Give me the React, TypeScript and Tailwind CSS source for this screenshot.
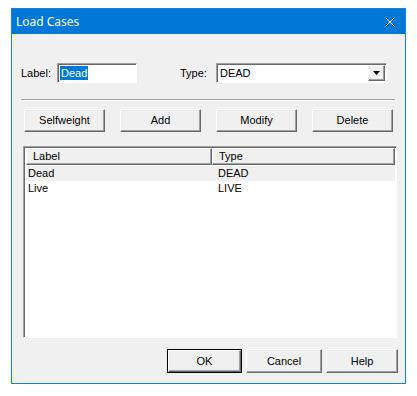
const raised =
  "border-t border-l border-t-white border-l-white border-r border-b border-r-[#696969] border-b-[#696969] shadow-[inset_-1px_-1px_0_#a0a0a0]";
const sunken =
  "border-t border-l border-t-[#a0a0a0] border-l-[#a0a0a0] border-r border-b border-r-white border-b-white shadow-[inset_1px_1px_0_#696969]";

function Button({ label, className = "" }: { label: string; className?: string }) {
  return (
    <div
      className={`h-[23px] flex items-center justify-center bg-[#f0f0f0] text-[11px] text-black ${raised} ${className}`}
    >
      {label}
    </div>
  );
}

export default function App() {
  return (
    <div className="w-[417px] h-[396px] bg-white pt-[8px] pl-[11px] font-['Liberation_Sans',Arial,sans-serif]">
      <div className="w-[395px] h-[376px] border border-[#1a80d4] flex flex-col bg-[#f0f0f0]">
        {/* title bar */}
        <div className="h-[25px] bg-[#0078d7] flex items-center justify-between pl-[4px] pr-[10px] shrink-0">
          <span className="text-white text-[12px] font-['Noto_Sans',sans-serif]">Load Cases</span>
          <svg width="10" height="10" viewBox="0 0 10 10">
            <path d="M0.5 0.5 L9.5 9.5 M9.5 0.5 L0.5 9.5" stroke="white" strokeWidth="1" />
          </svg>
        </div>

        <div className="flex flex-col pl-[9px]">
          {/* label / type row */}
          <div className="flex items-center mt-[29px] h-[20px]">
            <span className="text-[11px] w-[36px]">Label:</span>
            <div className={`w-[80px] h-[20px] bg-white flex items-center pl-[2px] ${sunken}`}>
              <span className="bg-[#0078d7] text-white text-[11px] leading-[14px] px-[1px]">Dead</span>
            </div>
            <span className="text-[11px] ml-[43px] w-[36px]">Type:</span>
            <div className={`w-[171px] h-[20px] bg-white flex items-center justify-between pl-[3px] pr-[1px] ${sunken}`}>
              <span className="text-[11px]">DEAD</span>
              <div className={`w-[17px] h-[16px] bg-[#f0f0f0] flex items-center justify-center ${raised}`}>
                <svg width="7" height="4" viewBox="0 0 7 4">
                  <path d="M0 0 H7 L3.5 4 Z" fill="black" />
                </svg>
              </div>
            </div>
          </div>

          {/* separator */}
          <div className="mt-[16px] w-[374px] h-[2px] border-t border-t-[#a0a0a0] border-b border-b-white" />

          {/* action buttons */}
          <div className="flex gap-[15px] mt-[8px] ml-[3px]">
            <Button label="Selfweight" className="w-[81px]" />
            <Button label="Add" className="w-[81px]" />
            <Button label="Modify" className="w-[81px]" />
            <Button label="Delete" className="w-[81px]" />
          </div>

          {/* list view */}
          <div className={`mt-[14px] ml-[2px] w-[374px] h-[192px] bg-white flex flex-col p-[1px] ${sunken}`}>
            <div className="flex h-[17px] text-[11px] ml-[1px]">
              <div className={`w-[186px] flex items-center pl-[6px] bg-[#f0f0f0] ${raised}`}>Label</div>
              <div className={`flex-1 flex items-center pl-[6px] bg-[#f0f0f0] ${raised}`}>Type</div>
            </div>
            <div className="flex h-[15px] items-center text-[11px] bg-[#f0f0f0] mt-[1px] ml-[1px]">
              <span className="w-[186px] pl-[2px]">Dead</span>
              <span className="pl-[6px]">DEAD</span>
            </div>
            <div className="flex h-[14px] items-center text-[11px] ml-[1px]">
              <span className="w-[186px] pl-[2px]">Live</span>
              <span className="pl-[6px]">LIVE</span>
            </div>
          </div>

          {/* footer buttons */}
          <div className="flex mt-[11px] ml-[146px]">
            <div className="w-[75px] h-[24px] border border-black">
              <Button label="OK" className="w-full h-full" />
            </div>
            <Button label="Cancel" className="w-[76px] ml-[4px] h-[24px]" />
            <Button label="Help" className="w-[72px] ml-[4px] h-[24px]" />
          </div>
        </div>
      </div>
    </div>
  );
}
